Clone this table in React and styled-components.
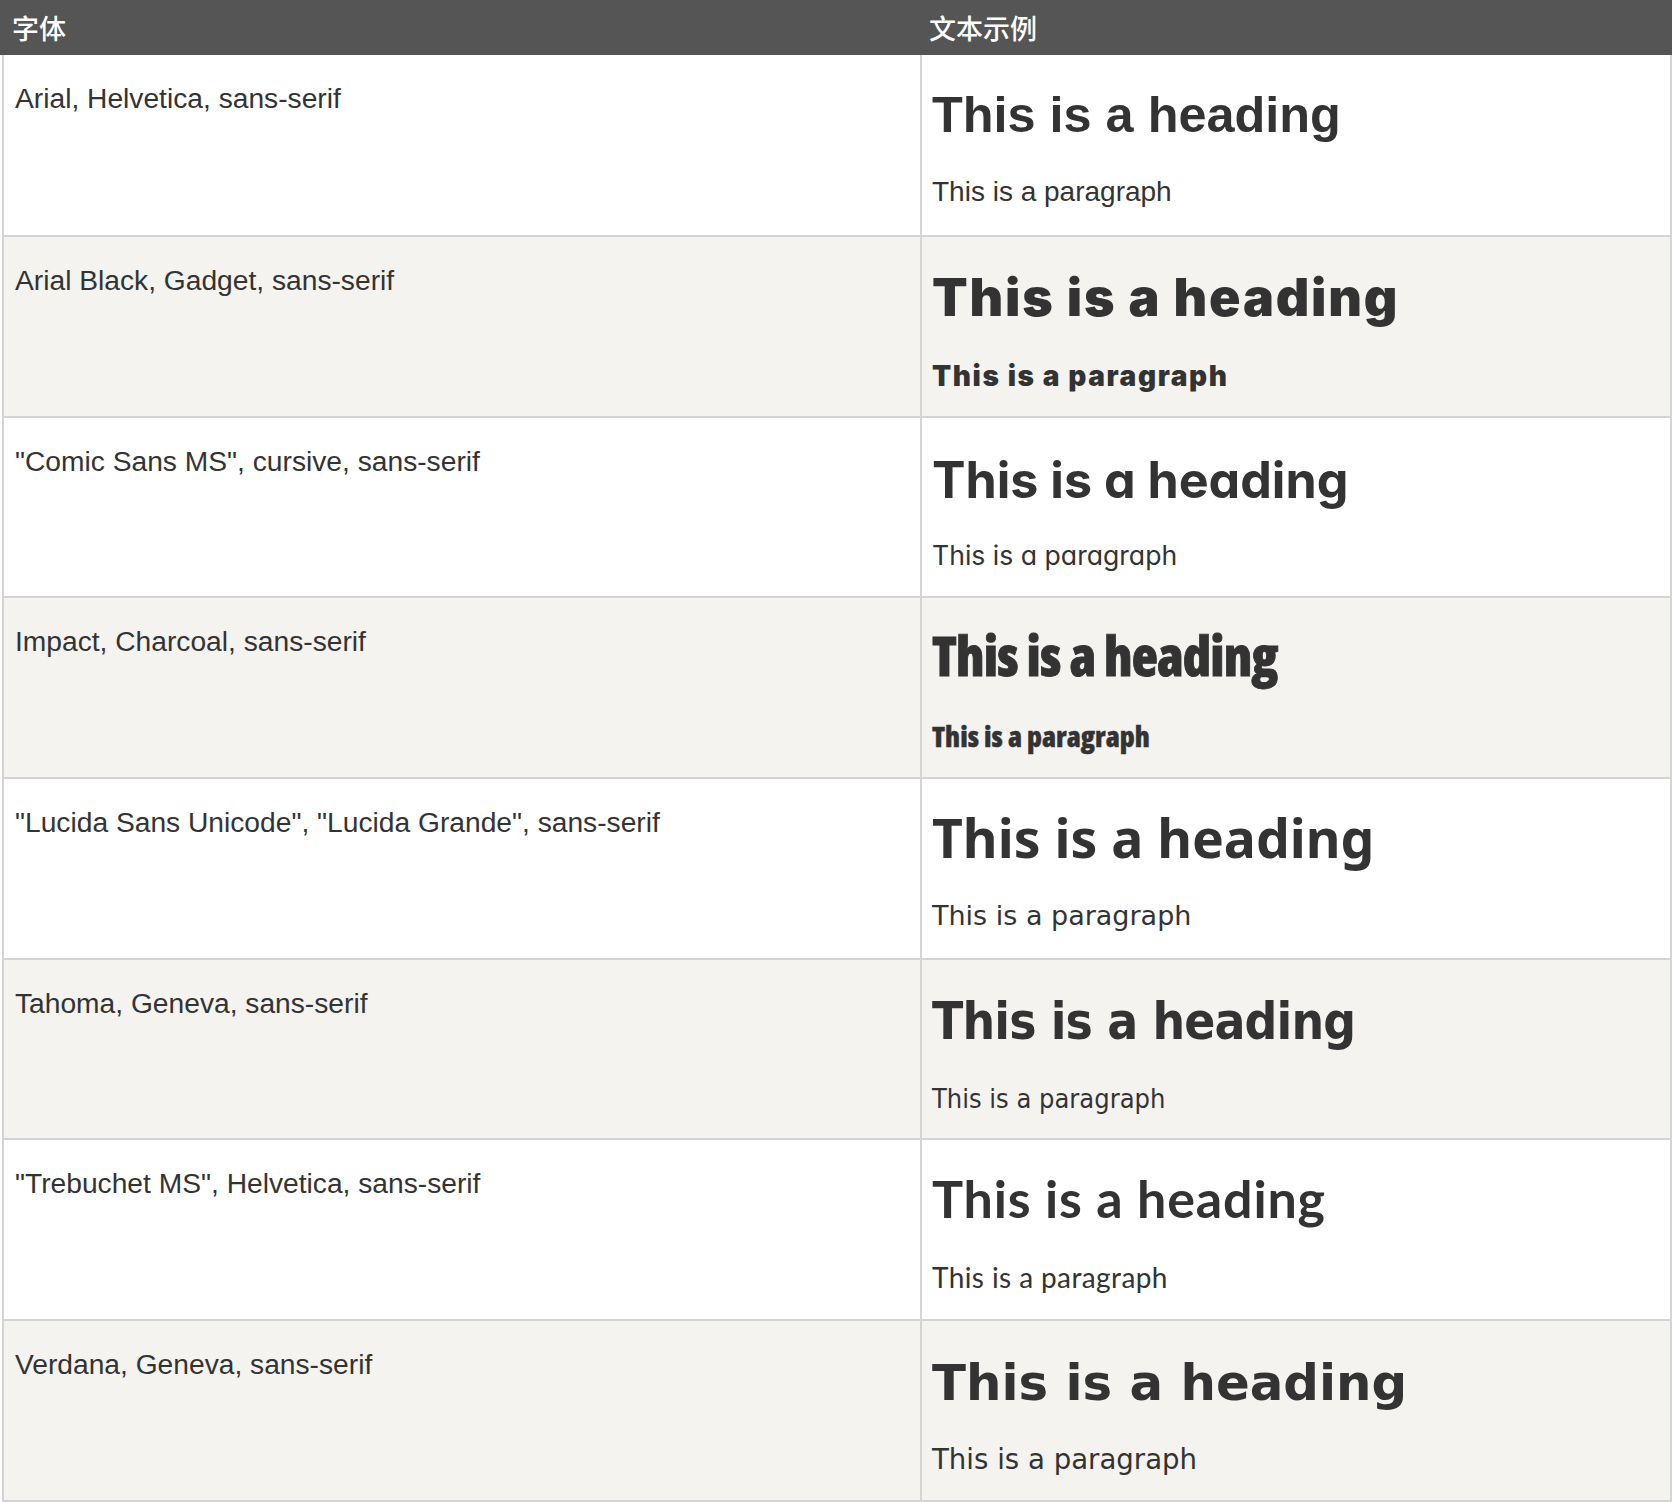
import React from "react";
import styled, { createGlobalStyle, css } from "styled-components";

const GlobalStyle = createGlobalStyle`
  html, body { margin: 0; padding: 0; background: #ffffff; }
  *, *::before, *::after { box-sizing: border-box; }
`;

/* (ascent - descent) / 2 per em, used to place baselines inside fixed line boxes */
const METRIC = {
  lib: 0.35,
  dejavu: 0.345,
  open: 0.39,
  noto: 0.39,
  lato: 0.39,
  inter: 0.365,
};

const CELL_TOP = 14;
const HEAD_LH = 60;
const PARA_LH = 40;

const ROWS = [
  {
    name: "Arial, Helvetica, sans-serif",
    head: { family: '"Liberation Sans", sans-serif', m: "lib", size: 50.4, weight: 700 },
    para: { family: '"Liberation Sans", sans-serif', m: "lib", size: 28, weight: 400 },
    hb: 78,
    pb: 147,
  },
  {
    name: "Arial Black, Gadget, sans-serif",
    head: { family: "Inter, sans-serif", m: "inter", size: 52, weight: 900, spacing: 1.8 },
    para: { family: "Inter, sans-serif", m: "inter", size: 28, weight: 900, spacing: 1.6 },
    hb: 80,
    pb: 149.5,
  },
  {
    name: '"Comic Sans MS", cursive, sans-serif',
    head: { family: "Inter, sans-serif", m: "inter", size: 50.2, weight: 700, features: '"cv11" 1' },
    para: { family: "Inter, sans-serif", m: "inter", size: 26.6, weight: 400, features: '"cv11" 1' },
    hb: 80.7,
    pb: 147.3,
  },
  {
    name: "Impact, Charcoal, sans-serif",
    head: { family: '"Open Sans", sans-serif', m: "open", size: 54, weight: 800, stretch: "75%", spacing: -0.8, stroke: 0.8 },
    para: { family: '"Open Sans", sans-serif', m: "open", size: 28.5, weight: 800, stretch: "75%", stroke: 0.4 },
    hb: 78,
    pb: 148.4,
  },
  {
    name: '"Lucida Sans Unicode", "Lucida Grande", sans-serif',
    head: { family: '"Noto Sans", sans-serif', m: "noto", size: 53.5, weight: 700 },
    para: { family: '"DejaVu Sans", sans-serif', m: "dejavu", size: 27, weight: 400 },
    hb: 80,
    pb: 146.8,
  },
  {
    name: "Tahoma, Geneva, sans-serif",
    head: { family: '"DejaVu Sans Condensed", "DejaVu Sans", sans-serif', m: "dejavu", size: 51, weight: 700, spacing: -0.85 },
    para: { family: '"DejaVu Sans Condensed", "DejaVu Sans", sans-serif', m: "dejavu", size: 27, weight: 400 },
    hb: 80.2,
    pb: 148.5,
  },
  {
    name: '"Trebuchet MS", Helvetica, sans-serif',
    head: { family: "Lato, sans-serif", m: "lato", size: 52, weight: 700, spacing: 0.85 },
    para: { family: "Lato, sans-serif", m: "lato", size: 28, weight: 400, spacing: 0.4 },
    hb: 78,
    pb: 148,
  },
  {
    name: "Verdana, Geneva, sans-serif",
    head: { family: '"DejaVu Sans", sans-serif', m: "dejavu", size: 49.8, weight: 700 },
    para: { family: '"DejaVu Sans", sans-serif', m: "dejavu", size: 27.6, weight: 400 },
    hb: 79.6,
    pb: 149,
  },
];

const fontFace = css`
  font-family: ${(p) => p.$font.family};
  font-size: ${(p) => p.$font.size}px;
  font-weight: ${(p) => p.$font.weight};
  font-stretch: ${(p) => p.$font.stretch || "100%"};
  letter-spacing: ${(p) => p.$font.spacing || 0}px;
  font-feature-settings: ${(p) => p.$font.features || "normal"};
  -webkit-text-stroke: ${(p) => p.$font.stroke || 0}px #333333;
`;

const Table = styled.div`
  width: 1672px;
  display: flex;
  flex-direction: column;
`;

const HeaderRow = styled.div`
  display: grid;
  grid-template-columns: 917px 1fr;
  align-items: center;
  height: 55px;
  background: #555555;
  color: #ffffff;
`;

const HeaderCell = styled.div`
  padding-left: 12px;
  font-family: "Noto Sans CJK SC", sans-serif;
  font-size: 27px;
  font-weight: 500;
  line-height: 27px;
`;

const Row = styled.div`
  display: grid;
  grid-template-columns: 918px 1fr;
  width: 1670px;
  margin-left: 2px;
  height: ${(p) => (p.$first ? "182px" : "180.67px")};
  background: ${(p) => (p.$alt ? "#f4f3f0" : "#ffffff")};
  border-left: 2px solid #d4d4d4;
  border-right: 2px solid #d4d4d4;
  border-bottom: 2px solid #d4d4d4;
`;

const FontName = styled.div`
  padding: ${CELL_TOP}px 10px 0 11px;
  border-right: 2px solid #d4d4d4;
  font-family: "Liberation Sans", sans-serif;
  font-size: 28.2px;
  line-height: 59px;
  color: #333333;
  white-space: nowrap;
`;

const SampleCell = styled.div`
  padding: ${CELL_TOP}px 10px 0;
  color: #333333;
  overflow: visible;
`;

const SampleHeading = styled.h1`
  margin: ${(p) => p.$mt}px 0 0;
  line-height: ${HEAD_LH}px;
  white-space: nowrap;
  color: #333333;
  ${fontFace}
`;

const SampleParagraph = styled.p`
  margin: ${(p) => p.$mt}px 0 0;
  line-height: ${PARA_LH}px;
  white-space: nowrap;
  color: #333333;
  ${fontFace}
`;

function offsets(row) {
  const hk = METRIC[row.head.m] * row.head.size;
  const pk = METRIC[row.para.m] * row.para.size;
  const m1 = row.hb - CELL_TOP - HEAD_LH / 2 - hk;
  const m2 = row.pb - CELL_TOP - m1 - HEAD_LH - PARA_LH / 2 - pk;
  return { m1, m2 };
}

export default function App() {
  return (
    <>
      <GlobalStyle />
      <Table>
        <HeaderRow>
          <HeaderCell>字体</HeaderCell>
          <HeaderCell>文本示例</HeaderCell>
        </HeaderRow>
        {ROWS.map((row, i) => {
          const { m1, m2 } = offsets(row);
          return (
            <Row key={row.name} $first={i === 0} $alt={i % 2 === 1}>
              <FontName>{row.name}</FontName>
              <SampleCell>
                <SampleHeading $font={row.head} $mt={m1}>
                  This is a heading
                </SampleHeading>
                <SampleParagraph $font={row.para} $mt={m2}>
                  This is a paragraph
                </SampleParagraph>
              </SampleCell>
            </Row>
          );
        })}
      </Table>
    </>
  );
}
